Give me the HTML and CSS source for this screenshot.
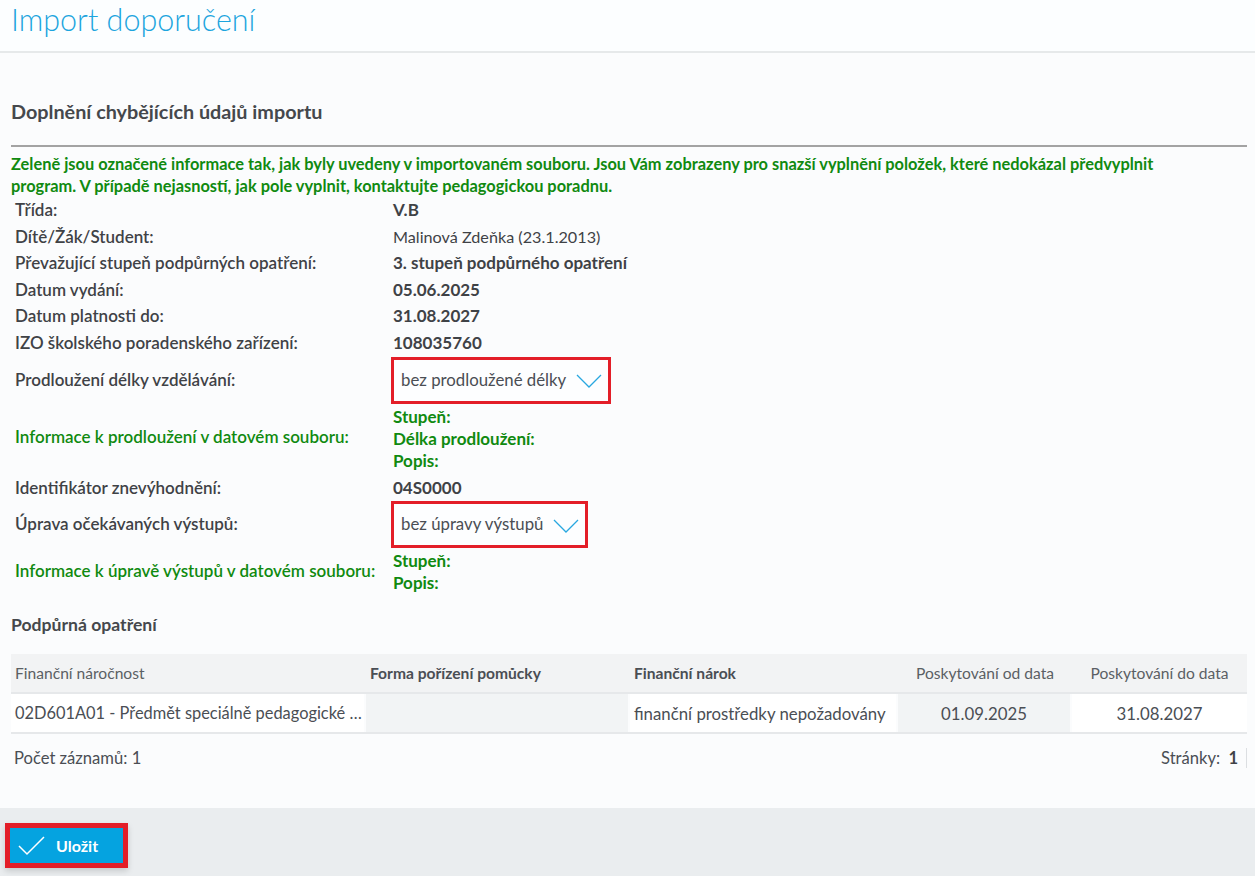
FILE: index.html
```html
<!DOCTYPE html>
<html lang="cs">
<head>
<meta charset="utf-8">
<title>Import doporučení</title>
<link rel="stylesheet" href="styles.css">
</head>
<body>
<header class="page-header">
  <h1 class="page-title">Import doporučení</h1>
</header>
<main class="content">
  <h2 class="section-title">Doplnění chybějících údajů importu</h2>
  <div class="rule"></div>
  <p class="notice">Zeleně jsou označené informace tak, jak byly uvedeny v importovaném souboru. Jsou Vám zobrazeny pro snazší vyplnění položek, které nedokázal předvyplnit program. V případě nejasností, jak pole vyplnit, kontaktujte pedagogickou poradnu.</p>
  <div class="form">
    <div class="label">Třída:</div><div class="value">V.B</div>
    <div class="label">Dítě/Žák/Student:</div><div class="value normal">Malinová Zdeňka (23.1.2013)</div>
    <div class="label">Převažující stupeň podpůrných opatření:</div><div class="value">3. stupeň podpůrného opatření</div>
    <div class="label">Datum vydání:</div><div class="value">05.06.2025</div>
    <div class="label">Datum platnosti do:</div><div class="value">31.08.2027</div>
    <div class="label">IZO školského poradenského zařízení:</div><div class="value">108035760</div>
    <div class="label select-label">Prodloužení délky vzdělávání:</div>
    <div class="value select-cell">
      <div class="select">bez prodloužené délky
        <svg class="chev" width="26" height="14" viewBox="0 0 26 14"><path d="M1 1 L13 13 L25 1" fill="none" stroke="#29a8e0" stroke-width="1.3"/></svg>
      </div>
    </div>
    <div class="label green info-label">Informace k prodloužení v datovém souboru:</div>
    <div class="value green info-list"><div>Stupeň:</div><div>Délka prodloužení:</div><div>Popis:</div></div>
    <div class="label ident">Identifikátor znevýhodnění:</div><div class="value ident">04S0000</div>
    <div class="label select-label">Úprava očekávaných výstupů:</div>
    <div class="value select-cell">
      <div class="select">bez úpravy výstupů
        <svg class="chev" width="26" height="14" viewBox="0 0 26 14"><path d="M1 1 L13 13 L25 1" fill="none" stroke="#29a8e0" stroke-width="1.3"/></svg>
      </div>
    </div>
    <div class="label green info-label">Informace k úpravě výstupů v datovém souboru:</div>
    <div class="value green info-list"><div>Stupeň:</div><div>Popis:</div></div>
  </div>

  <h3 class="sub-title">Podpůrná opatření</h3>
  <div class="table">
    <div class="row head">
      <div class="cell c1">Finanční náročnost</div>
      <div class="cell c2 bold">Forma pořízení pomůcky</div>
      <div class="cell c3 bold">Finanční nárok</div>
      <div class="cell c4 center">Poskytování od data</div>
      <div class="cell c5 center">Poskytování do data</div>
    </div>
    <div class="row body">
      <div class="cell c1 white ellipsis">02D601A01 - Předmět speciálně pedagogické péče - logopedie</div>
      <div class="cell c2 grey"></div>
      <div class="cell c3 white">finanční prostředky nepožadovány</div>
      <div class="cell c4 grey center">01.09.2025</div>
      <div class="cell c5 white center">31.08.2027</div>
    </div>
  </div>
  <div class="table-footer">
    <span>Počet záznamů: 1</span>
    <span class="pages">Stránky: <b>1</b></span>
  </div>
</main>
<footer class="page-footer">
  <button class="save-btn" type="button">
    <svg width="28" height="20" viewBox="0 0 28 20"><path d="M1 10 L9 18 L26 1" fill="none" stroke="#fff" stroke-width="1.5"/></svg>
    <span>Uložit</span>
  </button>
</footer>
</body>
</html>
```
FILE: styles.css
```css
html, body { margin: 0; padding: 0; }
body {
  background: #fbfcfd;
  font-family: "Lato", "Noto Sans", sans-serif;
  color: #3f4246;
  width: 1255px;
  height: 876px;
  overflow: hidden;
  display: flex;
  flex-direction: column;
}
.page-header {
  height: 51px;
  border-bottom: 2px solid #e6e9ea;
  background: #fcfeff;
  padding-left: 11px;
}
.page-title {
  margin: 0;
  font-weight: 300;
  font-size: 30.5px;
  line-height: 38px;
  color: #1da5de;
}
.content {
  padding: 0 8px 0 11px;
  flex: 1;
}
.section-title {
  margin: 46px 0 0;
  font-size: 19.8px;
  font-weight: 700;
  line-height: 24px;
  color: #45484c;
}
.rule {
  margin-top: 22px;
  height: 2px;
  background: #a3a3a3;
}
.notice {
  margin: 0;
  padding-top: 6px;
  max-width: 1205px;
  color: #108a10;
  font-weight: 700;
  font-size: 16.4px;
  line-height: 22px;
}
.form {
  display: grid;
  grid-template-columns: 378px 1fr;
  padding-left: 4px;
  font-size: 17px;
}
.label, .value {
  line-height: 26.6px;
  font-weight: 600;
}
.value { font-weight: 700; }
.value.normal { font-weight: 400; font-size: 16.2px; }
.green { color: #108a10; }
.select-label { display: flex; align-items: center; }
.select-cell { margin-left: -2px; }
.select {
  display: inline-flex;
  align-items: center;
  gap: 10px;
  height: 41px;
  border: 3px solid #e31e28;
  background: #fdfeff;
  padding: 0 6px 0 7px;
  font-weight: 400;
  font-size: 16.8px;
  color: #4a4e54;
}
.chev { margin-top: 2px; }
.info-label { display: flex; align-items: center; }
.info-list { padding-top: 2px; }
.info-list div { line-height: 22px; }
.ident { padding-top: 3px; }
.sub-title {
  margin: 20px 0 0;
  font-size: 17.6px;
  font-weight: 700;
  line-height: 22px;
  color: #45484c;
}
.table {
  margin-top: 18px;
  width: 1236px;
  font-size: 15.6px;
}
.row { display: flex; }
.row.head {
  background: #f2f3f4;
  height: 38px;
  border-bottom: 2px solid #e6e8ea;
  color: #5b5f64;
}
.row.body {
  height: 38px;
  border-bottom: 2px solid #e6e8ea;
  color: #4a4e54;
  font-size: 16.8px;
  gap: 2px;
}
.cell {
  display: flex;
  align-items: center;
  padding: 0 4px;
  box-sizing: border-box;
  white-space: nowrap;
  overflow: hidden;
}
.c1 { width: 355px; }
.c2 { width: 264px; }
.c3 { width: 268px; }
.c4 { width: 174px; }
.c5 { width: 175px; }
.row.body .c1 { width: 353px; padding-right: 2px; font-size: 16.4px; }
.row.body .c2 { width: 262px; }
.row.body .c3 { width: 266px; }
.row.body .c4 { width: 172px; }
.bold { font-weight: 700; color: #4a4e54; }
.center { justify-content: center; }
.white { background: #ffffff; }
.grey { background: #f2f4f5; }
.ellipsis { display: block; line-height: 38px; text-overflow: ellipsis; }
.table-footer {
  display: flex;
  justify-content: space-between;
  width: 1236px;
  margin-top: 14px;
  padding-left: 3px;
  box-sizing: border-box;
  font-size: 16.6px;
  color: #4a4e54;
}
.pages {
  padding-right: 8px;
  border-right: 1px solid #dcdfe2;
}
.pages b { margin-left: 4px; color: #3f4246; }
.page-footer {
  height: 68px;
  background: #eaedef;
  padding: 15px 0 0 5px;
  box-sizing: border-box;
}
.save-btn {
  display: flex;
  align-items: center;
  gap: 10px;
  width: 123px;
  height: 45px;
  border: 5px solid #e31e28;
  background: #05a3e0;
  padding: 0 0 0 8px;
  color: #fff;
  font-family: "Lato", "Noto Sans", sans-serif;
  font-weight: 700;
  font-size: 16px;
  box-shadow: 0 3px 6px rgba(0,0,0,0.15);
}
```
